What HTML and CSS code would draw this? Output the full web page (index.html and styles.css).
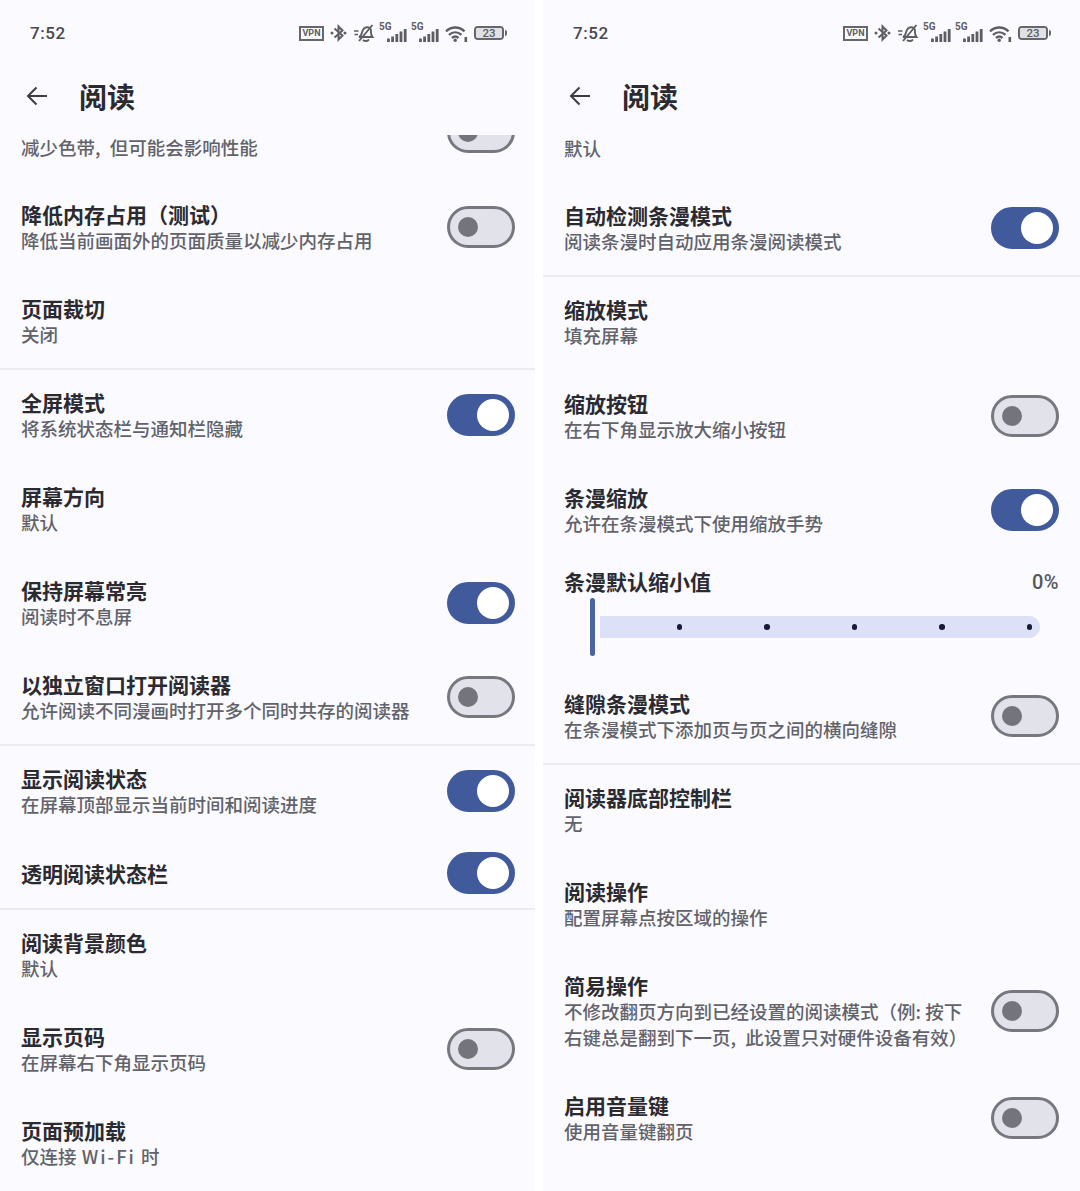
FILE: index.html
```html
<!DOCTYPE html>
<html lang="zh-CN">
<head>
  <meta charset="UTF-8">
  <title>阅读</title>
  <link rel="stylesheet" href="styles.css">
</head>
<body>

  <svg class="defs" width="0" height="0" aria-hidden="true">
    <symbol id="i-bt" viewBox="0 0 17 18">
      <path d="M4.500 4.500 12.500 11.500 8.500 15.500V2.500L12.500 6.500 4.500 13.500" fill="none" stroke="currentColor" stroke-width="2"/>
      <circle cx="2" cy="9" r="1.500" fill="currentColor"/>
      <circle cx="15" cy="9" r="1.500" fill="currentColor"/>
    </symbol>
    <symbol id="i-mute" viewBox="0 0 22 18">
      <path d="M5 13c2-.8 2.500-2.500 3-4.500C8.700 5.500 10.500 3 13.500 3.200c2.700.2 3.800 2.500 3.500 5-.2 2 .5 3.500 1.500 4.800Z" fill="none" stroke="currentColor" stroke-width="1.900"/>
      <path d="M5 17 18.500 1M9 15.800c1.500 1.700 4.500 1.700 6-.3" fill="none" stroke="currentColor" stroke-width="1.900"/>
      <path d="M0 7h4.500M.5 10.500h3.500" stroke="currentColor" stroke-width="1.500"/>
    </symbol>
    <symbol id="i-signal" viewBox="0 0 20 13">
      <rect x="0" y="9.500" width="2.800" height="3.500" fill="currentColor"/>
      <rect x="4.200" y="7.500" width="2.800" height="5.500" fill="currentColor"/>
      <rect x="8.400" y="5" width="2.800" height="8" fill="currentColor"/>
      <rect x="12.600" y="2.500" width="2.800" height="10.500" fill="currentColor"/>
      <rect x="16.800" y="0" width="2.800" height="13" fill="currentColor"/>
    </symbol>
    <symbol id="i-wifi" viewBox="0 0 23 17">
      <path d="M1 6.300c5.500-5 13-5 18.500 0M4 9.800c3.800-3.300 8.700-3.300 12.500 0M7 13c2-1.700 4.500-1.700 6.500 0" fill="none" stroke="currentColor" stroke-width="2.400"/>
      <circle cx="10.200" cy="15.300" r="1.700" fill="currentColor"/>
      <rect x="19.500" y="12" width="2.600" height="5" fill="currentColor"/>
    </symbol>
    <symbol id="i-back" viewBox="0 0 22 20">
      <path d="M21 10H2M10.500 1.500 2 10l8.500 8.500" fill="none" stroke="currentColor" stroke-width="2"/>
    </symbol>
  </svg>

  <div class="screens">

    <!-- 左屏 -->
    <section class="pane pane-left">
      <div class="statusbar">
        <span class="clock">7:52</span>
        <div class="status-icons">
          <span class="vpn">VPN</span>
          <svg class="ic-bt"><use href="#i-bt"/></svg>
          <svg class="ic-mute"><use href="#i-mute"/></svg>
          <span class="net"><b>5G</b><svg class="ic-signal"><use href="#i-signal"/></svg></span>
          <span class="net"><b>5G</b><svg class="ic-signal"><use href="#i-signal"/></svg></span>
          <svg class="ic-wifi"><use href="#i-wifi"/></svg>
          <span class="battery"><span class="battery-level">23</span></span>
        </div>
      </div>
      <header class="topbar">
        <svg class="back"><use href="#i-back"/></svg>
        <h1>阅读</h1>
      </header>
      <div class="scroller">
        <div class="list">
          <div class="row row-cut">
            <div class="text"><div class="sub">减少色带<span class="comma">,</span> 但可能会影响性能</div></div>
            <span class="toggle"></span>
          </div>
          <div class="row">
            <div class="text"><div class="title">降低内存占用（测试）</div><div class="sub">降低当前画面外的页面质量以减少内存占用</div></div>
            <span class="toggle"></span>
          </div>
          <div class="row">
            <div class="text"><div class="title">页面裁切</div><div class="sub">关闭</div></div>
          </div>
          <div class="divider"></div>
          <div class="row">
            <div class="text"><div class="title">全屏模式</div><div class="sub">将系统状态栏与通知栏隐藏</div></div>
            <span class="toggle on"></span>
          </div>
          <div class="row">
            <div class="text"><div class="title">屏幕方向</div><div class="sub">默认</div></div>
          </div>
          <div class="row">
            <div class="text"><div class="title">保持屏幕常亮</div><div class="sub">阅读时不息屏</div></div>
            <span class="toggle on"></span>
          </div>
          <div class="row">
            <div class="text"><div class="title">以独立窗口打开阅读器</div><div class="sub">允许阅读不同漫画时打开多个同时共存的阅读器</div></div>
            <span class="toggle"></span>
          </div>
          <div class="divider"></div>
          <div class="row">
            <div class="text"><div class="title">显示阅读状态</div><div class="sub">在屏幕顶部显示当前时间和阅读进度</div></div>
            <span class="toggle on"></span>
          </div>
          <div class="row row-single">
            <div class="text"><div class="title">透明阅读状态栏</div></div>
            <span class="toggle on"></span>
          </div>
          <div class="divider"></div>
          <div class="row">
            <div class="text"><div class="title">阅读背景颜色</div><div class="sub">默认</div></div>
          </div>
          <div class="row">
            <div class="text"><div class="title">显示页码</div><div class="sub">在屏幕右下角显示页码</div></div>
            <span class="toggle"></span>
          </div>
          <div class="row">
            <div class="text"><div class="title">页面预加载</div><div class="sub">仅连接 <span class="latin">Wi-Fi</span> 时</div></div>
          </div>
        </div>
      </div>
    </section>

    <!-- 右屏 -->
    <section class="pane pane-right">
      <div class="statusbar">
        <span class="clock">7:52</span>
        <div class="status-icons">
          <span class="vpn">VPN</span>
          <svg class="ic-bt"><use href="#i-bt"/></svg>
          <svg class="ic-mute"><use href="#i-mute"/></svg>
          <span class="net"><b>5G</b><svg class="ic-signal"><use href="#i-signal"/></svg></span>
          <span class="net"><b>5G</b><svg class="ic-signal"><use href="#i-signal"/></svg></span>
          <svg class="ic-wifi"><use href="#i-wifi"/></svg>
          <span class="battery"><span class="battery-level">23</span></span>
        </div>
      </div>
      <header class="topbar">
        <svg class="back"><use href="#i-back"/></svg>
        <h1>阅读</h1>
      </header>
      <div class="scroller">
        <div class="list">
          <div class="row row-cut">
            <div class="text"><div class="sub">默认</div></div>
          </div>
          <div class="row">
            <div class="text"><div class="title">自动检测条漫模式</div><div class="sub">阅读条漫时自动应用条漫阅读模式</div></div>
            <span class="toggle on"></span>
          </div>
          <div class="divider"></div>
          <div class="row">
            <div class="text"><div class="title">缩放模式</div><div class="sub">填充屏幕</div></div>
          </div>
          <div class="row">
            <div class="text"><div class="title">缩放按钮</div><div class="sub">在右下角显示放大缩小按钮</div></div>
            <span class="toggle"></span>
          </div>
          <div class="row">
            <div class="text"><div class="title">条漫缩放</div><div class="sub">允许在条漫模式下使用缩放手势</div></div>
            <span class="toggle on"></span>
          </div>
          <div class="slider-row">
            <div class="slider-head">
              <span class="title">条漫默认缩小值</span>
              <span class="slider-value">0%</span>
            </div>
            <div class="slider">
              <span class="slider-thumb"></span>
              <div class="slider-track">
                <i></i><i></i><i></i><i></i><i></i>
              </div>
            </div>
          </div>
          <div class="row">
            <div class="text"><div class="title">缝隙条漫模式</div><div class="sub">在条漫模式下添加页与页之间的横向缝隙</div></div>
            <span class="toggle"></span>
          </div>
          <div class="divider"></div>
          <div class="row">
            <div class="text"><div class="title">阅读器底部控制栏</div><div class="sub">无</div></div>
          </div>
          <div class="row">
            <div class="text"><div class="title">阅读操作</div><div class="sub">配置屏幕点按区域的操作</div></div>
          </div>
          <div class="row row-tall">
            <div class="text"><div class="title">简易操作</div><div class="sub">不修改翻页方向到已经设置的阅读模式（例: 按下<br>右键总是翻到下一页<span class="comma">,</span> 此设置只对硬件设备有效）</div></div>
            <span class="toggle"></span>
          </div>
          <div class="row">
            <div class="text"><div class="title">启用音量键</div><div class="sub">使用音量键翻页</div></div>
            <span class="toggle"></span>
          </div>
        </div>
      </div>
    </section>

  </div>

</body>
</html>
```

FILE: styles.css
```css
html, body {
  margin: 0;
  padding: 0;
  height: 1191px;
  overflow: hidden;
  background-color: #fff;
  font-family: "Noto Sans CJK SC", "Noto Sans", sans-serif;
  color: #1c1c22;
}
.defs {
  display: block;
  height: 0;
}
.screens {
  display: flex;
  gap: 8px;
  height: 1191px;
}
.pane {
  display: flex;
  flex-direction: column;
  background-color: #fbfaff;
  overflow: hidden;
}
.pane-left {
  width: 535px;
}
.pane-right {
  width: 537px;
}

/* Статус-бар */
.statusbar {
  display: flex;
  align-items: center;
  justify-content: space-between;
  flex: none;
  height: 66px;
  padding: 0 28px 0 30px;
  color: #5d5e64;
}
.pane-right .statusbar {
  padding-right: 29px;
}
.clock {
  font-family: Roboto, sans-serif;
  font-size: 17px;
  font-weight: 500;
  letter-spacing: 0.6px;
  color: #47484e;
}
.status-icons {
  display: flex;
  align-items: center;
  width: 208px;
}
.vpn {
  box-sizing: border-box;
  width: 25px;
  height: 15px;
  border: 2px solid #66676d;
  font-family: Roboto, sans-serif;
  font-size: 9px;
  font-weight: 700;
  line-height: 11px;
  text-align: center;
}
.ic-bt {
  width: 17px;
  height: 18px;
  margin-left: 6px;
}
.ic-mute {
  width: 22px;
  height: 18px;
  margin-left: 7px;
}
.net {
  position: relative;
  display: block;
  width: 28px;
  height: 18px;
  margin-left: 3px;
}
.net + .net {
  margin-left: 4px;
}
.net b {
  position: absolute;
  left: 0;
  top: -2px;
  font-family: Roboto, sans-serif;
  font-size: 10px;
  line-height: 10px;
}
.ic-signal {
  position: absolute;
  right: 0;
  bottom: 0;
  width: 20px;
  height: 13px;
}
.ic-wifi {
  width: 23px;
  height: 17px;
  margin-left: 6px;
}
.battery {
  position: relative;
  box-sizing: border-box;
  width: 30px;
  height: 14px;
  margin-left: 6px;
  border: 2px solid #66676d;
  border-radius: 4px;
}
.battery::after {
  content: "";
  position: absolute;
  right: -5px;
  top: 2px;
  width: 2px;
  height: 6px;
  border-radius: 0 2px 2px 0;
  background-color: #66676d;
}
.battery-level {
  display: block;
  height: 100%;
  font-family: Roboto, sans-serif;
  font-size: 11.500px;
  font-weight: 500;
  line-height: 10px;
  text-align: center;
  background-color: #e0e1e5;
  border-radius: 2px;
}

/* Шапка */
.topbar {
  display: flex;
  align-items: center;
  flex: none;
  box-sizing: border-box;
  height: 69px;
  padding: 0 0 10px 26px;
}
.back {
  width: 22px;
  height: 20px;
  margin-right: 31px;
  color: #3c3d43;
}
.topbar h1 {
  margin: 0;
  font-size: 28px;
  font-weight: 700;
  line-height: 40px;
  color: #2a2a30;
}

/* Список настроек */
.scroller {
  flex: 1;
  overflow: hidden;
}
.row {
  display: flex;
  align-items: center;
  justify-content: space-between;
  box-sizing: border-box;
  height: 94px;
  padding: 0 21px;
}
.pane-left .row {
  padding-right: 20px;
}
.row-single {
  height: 70px;
}
.row-tall {
  height: 120px;
}

/* Первая строка, прокрученная под шапку */
.row-cut {
  align-items: flex-start;
  height: 46px;
  overflow: hidden;
}
.pane-left .row-cut {
  height: 45px;
}
.pane-left .row-cut .sub {
  line-height: 24px;
}
.row-cut .toggle {
  margin-top: -24px;
}

.title {
  font-size: 21px;
  font-weight: 700;
  line-height: 26px;
  color: #2a2a30;
}
.sub {
  font-size: 18.500px;
  font-weight: 500;
  line-height: 26px;
  color: #62636a;
}
.comma {
  margin-right: 5px;
}
.latin {
  padding: 0 1px;
  letter-spacing: 2px;
}
.divider {
  height: 2px;
  margin-bottom: -2px;
  background-color: #ebebf0;
}

/* Переключатель */
.toggle {
  position: relative;
  flex: none;
  box-sizing: border-box;
  width: 68px;
  height: 42px;
  border: 3px solid #77787f;
  border-radius: 21px;
  background-color: #e1e2ea;
}
.toggle::after {
  content: "";
  position: absolute;
  left: 8px;
  top: 8px;
  width: 20px;
  height: 20px;
  border-radius: 50%;
  background-color: #73747c;
}
.toggle.on {
  border-color: #415a9c;
  background-color: #415a9c;
}
.toggle.on::after {
  left: 27px;
  top: 2px;
  width: 32px;
  height: 32px;
  background-color: #fff;
}

/* Слайдер */
.slider-row {
  box-sizing: border-box;
  height: 112px;
  padding: 11px 21px 0;
}
.slider-head {
  display: flex;
  align-items: center;
  justify-content: space-between;
}
.slider-value {
  padding-top: 3px;
  font-family: Roboto, sans-serif;
  font-size: 20px;
  font-weight: 500;
  letter-spacing: 0.4px;
  line-height: 23px;
  color: #55565c;
}
.slider {
  display: flex;
  align-items: center;
  gap: 5px;
  height: 58px;
  margin-top: 4px;
  padding-left: 26px;
}
.slider-thumb {
  flex: none;
  width: 5px;
  height: 58px;
  border-radius: 2.500px;
  background-color: #4a659f;
}
.slider-track {
  display: flex;
  align-items: center;
  justify-content: flex-end;
  gap: 82px;
  box-sizing: border-box;
  width: 440px;
  height: 22px;
  padding-right: 8px;
  border-radius: 0 11px 11px 0;
  background-color: #dce1f7;
}
.slider-track i {
  width: 5.500px;
  height: 5.500px;
  border-radius: 50%;
  background-color: #151b38;
}
```
